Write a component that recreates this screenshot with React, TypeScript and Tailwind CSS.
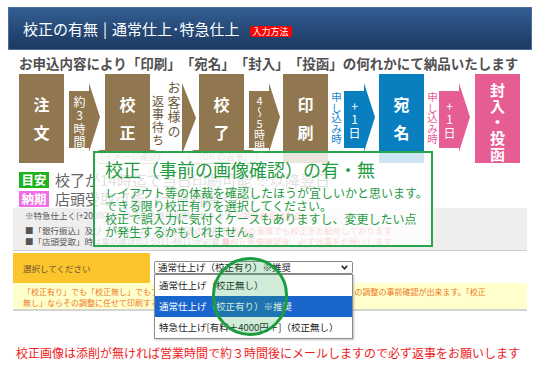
import React from "react";

function Box({ cls, children }: { cls: string; children: React.ReactNode }) {
  return (
    <div className={`h-[89px] w-[45px] shrink-0 flex flex-col items-center text-white font-bold ${cls}`}>
      {children}
    </div>
  );
}

function Arrow({ fill, cls, textCls, children }: { fill: string; cls: string; textCls: string; children: React.ReactNode }) {
  return (
    <div className={`relative h-[89px] w-[31px] shrink-0 ${cls}`}>
      <svg className="absolute inset-0" width="31" height="89" viewBox="0 0 31 89">
        <polygon points="0,17 20,17 20,9 31,43 20,78 20,74 0,74" fill={fill} />
      </svg>
      <div className={`relative w-[20px] flex justify-center ${textCls}`}>
        <div className="[writing-mode:vertical-rl] [text-orientation:upright] text-white">{children}</div>
      </div>
    </div>
  );
}

function VText({ cls, children }: { cls: string; children: React.ReactNode }) {
  return <div className={`[writing-mode:vertical-rl] [text-orientation:upright] ${cls}`}>{children}</div>;
}

export default function App() {
  return (
    <div className="relative w-[540px] h-[371px] overflow-hidden bg-white font-[family-name:'Noto_Sans_CJK_JP','Noto_Sans',sans-serif]">
      {/* header */}
      <div className="mx-[8px] mt-[7px] h-[43px] border border-[#4a6d9c] bg-linear-to-b from-[#325e93] to-[#1c3961] flex items-center pl-[14px]">
        <span className="text-white text-[15px] leading-[18px] whitespace-nowrap">
          校正の有無<span className="mx-[5px]">|</span>通常仕上･特急仕上
        </span>
        <span className="ml-[10px] mt-[6px] bg-[#ff0000] text-white text-[9px] leading-[11px] px-[3px] rounded-[2px] whitespace-nowrap">
          入力方法
        </span>
      </div>

      {/* sub heading */}
      <div className="mt-[5px] pl-[19px] text-[13.5px] leading-[17px] font-bold text-[#505050] whitespace-nowrap [text-spacing-trim:space-all]">
        お申込内容により「印刷」「宛名」「封入」「投函」の何れかにて納品いたします
      </div>

      {/* flow */}
      <div className="mt-[2px] ml-[19px] flex h-[89px] items-start">
        <Box cls="bg-[#907750] pt-[16px] text-[16px] leading-[28px]">
          <span>注</span>
          <span>文</span>
        </Box>
        <Arrow fill="#907750" cls="ml-[5px]" textCls="pt-[22px] text-[12px] leading-[14px] tracking-[1.5px]">
          約3時間
        </Arrow>
        <Box cls="ml-[5px] bg-[#907750] pt-[16px] text-[16px] leading-[28px]">
          <span>校</span>
          <span>正</span>
        </Box>
        <div className="w-[32px] h-[89px] shrink-0 flex flex-row-reverse justify-center gap-[2px] text-[#6b5840]">
          <VText cls="pt-[7px] text-[13px] leading-[14px] tracking-[1.5px]">お客様の</VText>
          <VText cls="pt-[21px] text-[12px] leading-[13px] tracking-[1px]">返事待ち</VText>
        </div>
        <svg className="shrink-0" width="14" height="89" viewBox="0 0 14 89">
          <polygon points="0,9 14,44 0,80" fill="#907750" />
        </svg>
        <Box cls="ml-[3px] bg-[#907750] pt-[16px] text-[16px] leading-[28px]">
          <span>校</span>
          <span>了</span>
        </Box>
        <Arrow fill="#907750" cls="ml-[5px]" textCls="pt-[21px] text-[11px] leading-[13px] tracking-[0.5px]">
          4～5時間
        </Arrow>
        <Box cls="ml-[3px] bg-[#907750] pt-[16px] text-[16px] leading-[28px]">
          <span>印</span>
          <span>刷</span>
        </Box>
        <VText cls="ml-[2px] w-[12px] pt-[18px] text-[10.5px] leading-[12px] text-[#1a86c8]">申し込み時</VText>
        <Arrow fill="#0a7fc0" cls="ml-[2px]" textCls="pt-[26px] text-[12px] leading-[14px] tracking-[1.5px]">
          +1日
        </Arrow>
        <Box cls="ml-[4px] bg-[#0a7fc0] pt-[16px] text-[16px] leading-[28px]">
          <span>宛</span>
          <span>名</span>
        </Box>
        <VText cls="ml-[2px] w-[12px] pt-[18px] text-[10.5px] leading-[12px] text-[#e9609a]">申し込み時</VText>
        <Arrow fill="#e55d92" cls="ml-[1px]" textCls="pt-[26px] text-[12px] leading-[14px] tracking-[1.5px]">
          +1日
        </Arrow>
        <Box cls="ml-[5px] w-[44px] bg-[#e55d92] pt-[8px] text-[15px] leading-[16px]">
          <span>封</span>
          <span>入</span>
          <span>・</span>
          <span>投</span>
          <span>函</span>
        </Box>
      </div>

      {/* guide rows */}
      <div className="ml-[19px] mt-[9px] flex items-center h-[16px] whitespace-nowrap">
        <span className="w-[30px] h-[16px] bg-[#1fb21f] text-white text-[12.5px] font-bold leading-[16px] text-center">目安</span>
        <span className="ml-[6px] text-[15px] leading-[16px] text-[#666]">校了が14時迄で当日印刷可能 ※以降翌日</span>
      </div>
      <div className="ml-[19px] mt-[3px] flex items-center h-[16px] whitespace-nowrap">
        <span className="w-[30px] h-[16px] bg-[#ef6ee6] text-white text-[12.5px] font-bold leading-[16px] text-center">納期</span>
        <span className="ml-[6px] text-[15px] leading-[16px] text-[#666]">店頭受取可能（土日祝除く〜）</span>
      </div>

      {/* gray notes */}
      <div className="ml-[13px] mt-[1px] w-[514px] h-[43px] bg-[#eeeeee] border-b border-[#cfcfcf] pl-[12px] pt-[2px] text-[8.5px] leading-[11px] text-[#555] whitespace-nowrap">
        <div>※特急仕上く(+2000円)は校了後の最短納期となります <span className="text-[#e33]">※特急料金は別途</span></div>
        <div className="mt-[4px]">■「銀行振込」及び「代引」はご入金確認後の印刷 <span className="text-[#e33]">念の為の意味でも校正をお勧めしております</span></div>
        <div>■「店頭受取」時は電話確認(03-5911-4811)が必要 <span className="text-[#e33]">■校正画像確認後、必ず返事をお願いします</span></div>
      </div>

      {/* form row */}
      <div className="ml-[13px] mt-[2px] w-[514px] flex h-[30px]">
        <div className="w-[137px] bg-[#fcc52e] pl-[10px] flex items-center text-[8.5px] text-[#6a5030] whitespace-nowrap">選択してください</div>
        <div className="flex-1 pl-[4px] pt-[8px]">
          <div className="w-[199px] h-[13px] border border-[#8a8a8a] rounded-[2px] bg-white flex items-center justify-between pl-[3px] pr-[4px] text-[9.5px] leading-[11px] text-[#222] whitespace-nowrap">
            <span>通常仕上げ（校正有り）※推奨</span>
            <svg width="7" height="5" viewBox="0 0 7 5">
              <path d="M0.8 0.8 L3.5 3.8 L6.2 0.8" stroke="#222" strokeWidth="1.6" fill="none" />
            </svg>
          </div>
        </div>
      </div>

      {/* yellow note */}
      <div className="ml-[13px] w-[514px] h-[28px] bg-[#ffffcc] border-b-2 border-[#d4d4d4] pl-[10px] pt-[3px] text-[8px] leading-[11px] text-[#ee7722] whitespace-nowrap">
        <div>「校正有り」でも「校正無し」でもプリント時の色調整は行いますが、「校正有り」ならでその調整の事前確認が出来ます。「校正</div>
        <div>無し」ならその調整に任せて印刷する形となります。</div>
      </div>

      {/* bottom red */}
      <div className="mt-[35px] pl-[16px] text-[12px] leading-[14px] text-[#ee1c25] whitespace-nowrap">
        校正画像は添削が無ければ営業時間で約３時間後にメールしますので必ず返事をお願いします
      </div>

      {/* pills under boxes */}
      <div className="absolute left-[94px] top-[150px] w-[66px] h-[14px] rounded-full border border-[#907750] bg-white text-[9px] leading-[12px] text-[#907750] text-center whitespace-nowrap">
        （イメージ確認）
      </div>
      <div className="absolute left-[188px] top-[150px] w-[70px] h-[14px] rounded-full border border-[#907750] bg-white text-[9px] leading-[12px] text-[#907750] text-center whitespace-nowrap">
        （OK の返事）
      </div>

      {/* overlay explanation */}
      <div className="absolute left-[93px] top-[151px] w-[340px] h-[96px] border-2 border-[#27a64b] bg-white/80 pl-[10px] pt-[6px] text-[#1f9b42] whitespace-nowrap">
        <div className="text-[18px] leading-[20px]">校正（事前の画像確認）の有・無</div>
        <div className="mt-[7px] text-[12px] leading-[13px]">
          <div>レイアウト等の体裁を確認したほうが宜しいかと思います。</div>
          <div>できる限り校正有りを選択してください。</div>
          <div>校正で誤入力に気付くケースもありますし、変更したい点</div>
          <div>が発生するかもしれません。</div>
        </div>
      </div>

      {/* dropdown list */}
      <div className="absolute left-[154px] top-[274px] w-[199px] border border-[#8c8c8c] bg-white shadow-[1px_1px_2px_rgba(0,0,0,0.25)] text-[9.5px] text-[#222] whitespace-nowrap">
        <div className="h-[21px] flex items-center pl-[4px]">通常仕上げ（校正無し）</div>
        <div className="h-[21px] flex items-center pl-[4px] bg-[#1a66cc] text-white">通常仕上げ（校正有り）※推奨</div>
        <div className="h-[21px] flex items-center pl-[4px]">特急仕上げ[有料＋4000円＋]（校正無し）</div>
      </div>

      {/* highlight circle */}
      <div className="absolute left-[212px] top-[257px] w-[76px] h-[79px] rounded-full border-[3px] border-[#1b9c40] bg-[rgba(40,170,80,0.22)]" />
    </div>
  );
}
